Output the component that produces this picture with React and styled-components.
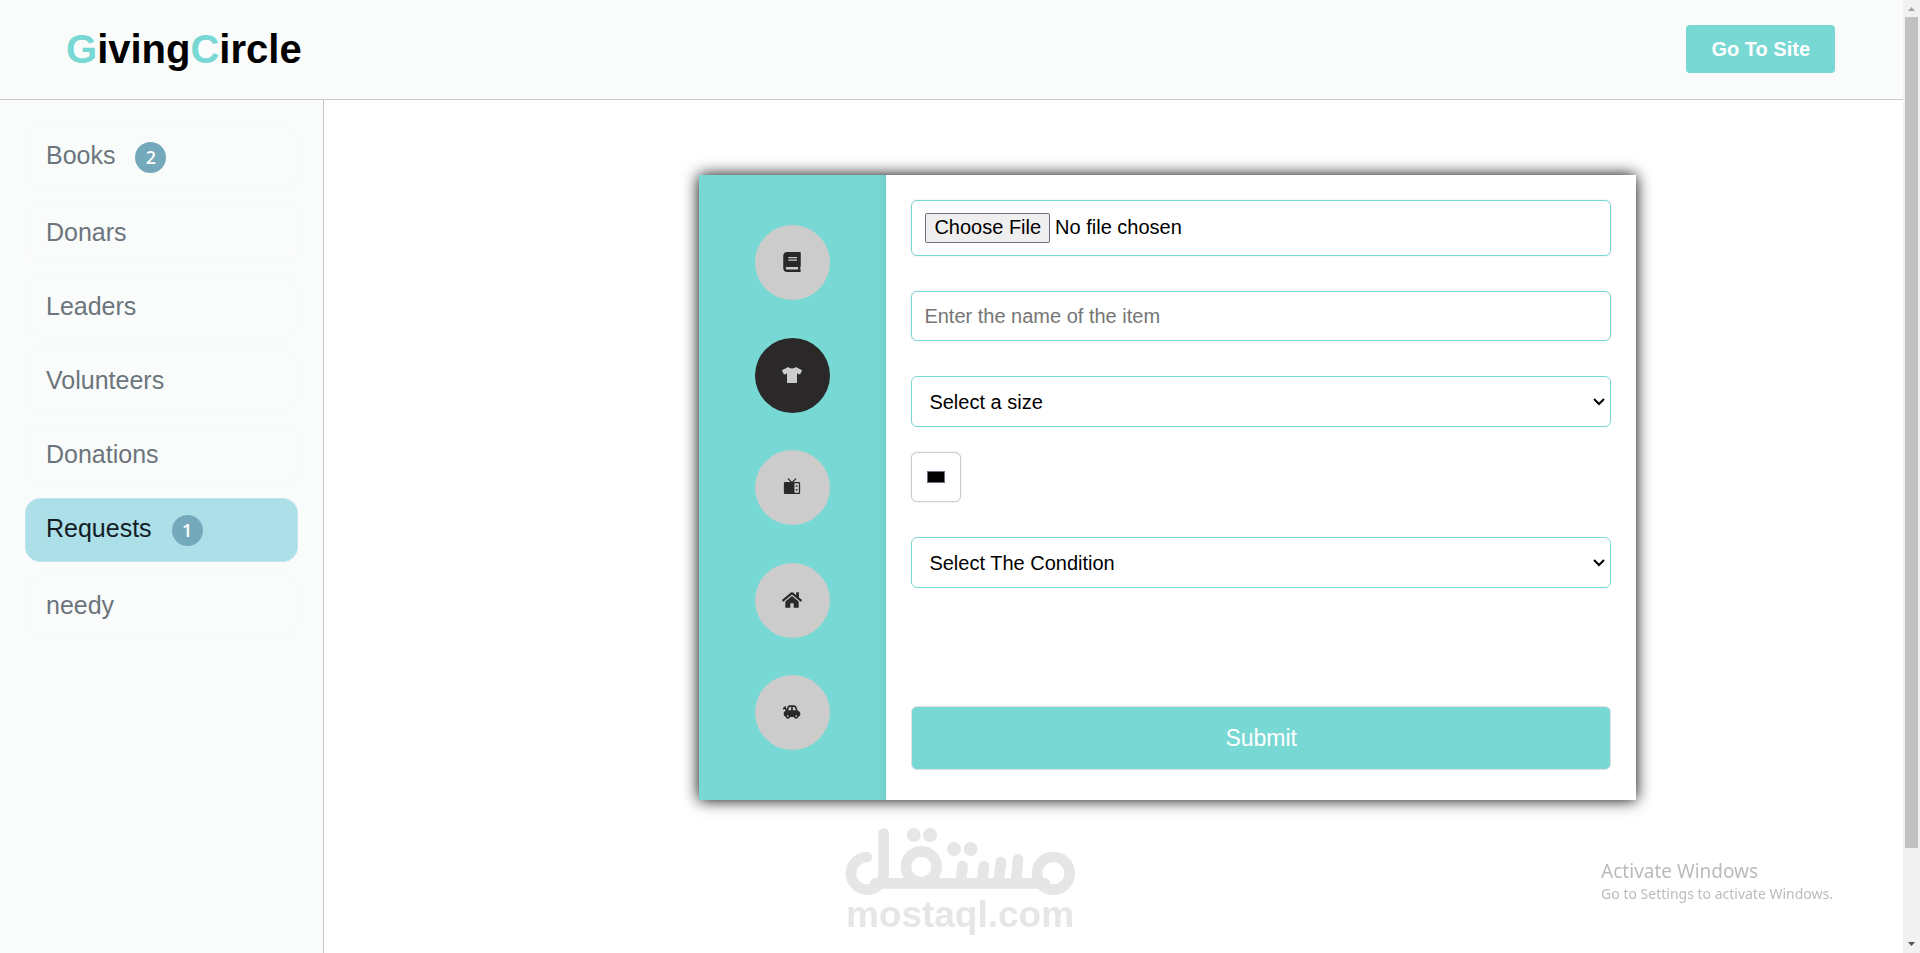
import { useState } from 'react'
import styled, { createGlobalStyle } from 'styled-components'
import { FaBook, FaTshirt, FaHome } from 'react-icons/fa'
import { PiTelevisionFill } from 'react-icons/pi'
import { MdToys } from 'react-icons/md'


const teal = '#78d8d3'
const dark = '#2a2829'
const panel = '#fafcfb'

const GlobalStyle = createGlobalStyle`
    * {
        box-sizing: border-box;
    }

    body {
        margin: 0;
        background: #fff;
        font-family: "Liberation Sans", Arial, sans-serif;
    }

    button, input, select {
        font-family: inherit;
    }
`

const Screen = styled.div`
    display: flex;
    height: 100vh;
    overflow: hidden;
`
const Page = styled.div`
    flex: 1;
    min-width: 0;
    display: flex;
    flex-flow: column;
`

const Header = styled.header`
    display: flex;
    justify-content: space-between;
    align-items: center;
    height: 100px;
    padding: 0 68px 1px 66px;
    background: ${panel};
    border-bottom: 1px solid #c8c8c8;
`
const Logo = styled.h1`
    margin: 0;
    font-size: 40px;
    line-height: 46px;
    color: #000;

    span {
        color: ${teal};
    }
`
const SiteButton = styled.button`
    height: 48px;
    padding: 1px 25px 0;
    border: 0;
    border-radius: 4px;
    background: ${teal};
    color: #fff;
    font-size: 20px;
    font-weight: bold;
    cursor: pointer;
`

const Body = styled.div`
    flex: 1;
    display: flex;
`
const Sidebar = styled.nav`
    display: flex;
    flex-flow: column;
    gap: 13px;
    width: 324px;
    padding: 25px;
    background: ${panel};
    border-right: 1px solid #c8c8c8;
`
const NavItem = styled.a`
    display: flex;
    align-items: flex-start;
    gap: 20px;
    padding: 14px 20px 15px;
    border: 1px solid ${({ $active }) => ($active ? '#bde5ec' : '#f8faf9')};
    border-radius: 15px;
    background: ${({ $active }) => ($active ? '#addfe8' : 'transparent')};
    color: ${({ $active }) => ($active ? '#141c26' : '#6c757d')};
    font-size: 25px;
    line-height: 30px;
    text-decoration: none;
`
const Badge = styled.span`
    width: 31px;
    height: 31px;
    margin-top: 2px;
    border-radius: 50%;
    background: #73a9bb;
    color: #fff;
    font-family: "Open Sans", sans-serif;
    font-size: 18px;
    font-weight: 600;
    line-height: 30px;
    text-align: center;
`

const Main = styled.main`
    flex: 1;
    padding: 75px 267px 0 375px;
`
const Card = styled.section`
    display: grid;
    grid-template-columns: 1fr 4fr;
    min-height: 625px;
    box-shadow: 0 0 15px #000;
`
const Categories = styled.div`
    display: flex;
    flex-flow: column;
    justify-content: space-between;
    align-items: center;
    padding: 50px 0;
    background: ${teal};
    box-shadow: inset -8px 0 10px -8px rgba(0, 0, 0, 0.1);
`
const CategoryButton = styled.button`
    display: flex;
    justify-content: center;
    align-items: center;
    width: 75px;
    height: 75px;
    padding: 0 1px 1px 0;
    border: 0;
    border-radius: 50%;
    background: ${({ $active }) => ($active ? dark : '#ccc')};
    color: ${({ $active }) => ($active ? '#ccc' : dark)};
    font-size: 20px;
    cursor: pointer;
`

const Form = styled.form`
    display: flex;
    flex-flow: column;
    gap: 35px;
    padding: 25px 25px 30px;
    background: #fff;
`
const SizeGroup = styled.div`
    display: flex;
    flex-flow: column;
    gap: 25px;
`
const Field = styled.input`
    width: 100%;
    height: 50px;
    padding: 12px;
    border: 1px solid ${teal};
    border-radius: 6px;
    background: #fff;
    box-shadow: 0 0 2px rgba(0, 0, 0, 0.15);
    color: #000;
    font-size: 20px;

    &::placeholder {
        color: #757575;
    }
`
const FileField = styled(Field)`
    height: 56px;
    padding: 12px 13px;

    &::file-selector-button {
        height: 30px;
        margin-right: 5px;
        padding: 0 8px 2px;
        border: 1px solid #6b7280;
        border-radius: 2px;
        background: #efefef;
        color: #000;
        font: inherit;
    }
`
const SelectWrapper = styled.div`
    position: relative;
    display: flex;

    svg {
        position: absolute;
        right: 6px;
        top: 21px;
        pointer-events: none;
    }
`
const SelectBox = styled.select`
    appearance: none;
    width: 100%;
    height: 51px;
    padding: 12px 17px;
    border: 1px solid ${teal};
    border-radius: 6px;
    background: #fff;
    color: #000;
    font-size: 20px;
`
const ColorField = styled.input`
    width: 50px;
    height: 50px;
    padding: 18px 15px;
    border: 1px solid #ccc;
    border-radius: 6px;
    background: #fff;
    box-shadow: 0 0 2px rgba(0, 0, 0, 0.15);

    &::-webkit-color-swatch-wrapper {
        padding: 0;
    }

    &::-webkit-color-swatch {
        border: 1px solid #6b7280;
        border-radius: 0;
    }
`
const Submit = styled.button`
    height: 64px;
    margin-top: auto;
    border: 1px solid #e0e0e0;
    border-radius: 6px;
    background: ${teal};
    color: #fff;
    font-size: 23px;
    cursor: pointer;
`

const Watermark = styled.div`
    position: fixed;
    left: 50%;
    bottom: 20px;
    transform: translateX(-50%);
    display: flex;
    flex-flow: column;
    align-items: center;
    color: #e6e6e6;
    font-size: 37px;
    font-weight: bold;
    line-height: 37px;
    pointer-events: none;
`
const ActivateNotice = styled.div`
    position: fixed;
    right: 87px;
    bottom: 49px;
    color: #bbb;
    font-family: "Noto Sans", sans-serif;
    font-size: 14px;
    line-height: 20px;
    pointer-events: none;

    p {
        margin: 0;
    }

    p:first-child {
        font-size: 19px;
        line-height: 26px;
    }
`

const ScrollBar = styled.div`
    display: flex;
    flex-flow: column;
    align-items: center;
    width: 17px;
    background: #f1f1f1;
`
const ScrollArrow = styled.svg`
    flex: none;
    width: 17px;
    height: 17px;
`
const ScrollThumb = styled.div`
    flex: 19;
    width: 13px;
    background: #c1c1c1;
`
const ScrollRest = styled.div`
    flex: 2;
`


const links = [
    { name: 'Books', count: 2 },
    { name: 'Donars' },
    { name: 'Leaders' },
    { name: 'Volunteers' },
    { name: 'Donations' },
    { name: 'Requests', count: 1 },
    { name: 'needy' },
]

const categories = [
    { name: 'Books', icon: <FaBook /> },
    { name: 'Clothes', icon: <FaTshirt /> },
    { name: 'Electronics', icon: <PiTelevisionFill /> },
    { name: 'Home', icon: <FaHome /> },
    { name: 'Toys', icon: <MdToys /> },
]

function MostaqlMark() {
    return (
        <svg width="230" height="68" viewBox="75 54 690 204" fill="currentColor" aria-hidden="true">
            <g fill="none" stroke="currentColor" strokeWidth="32" strokeLinecap="round">
                <path d="M141 141A49 49 0 1 0 191 190V70" />
                <path d="M165 220H675" />
                <circle cx="304" cy="170" r="46" />
                <circle cx="700" cy="190" r="49" />
                <path d="M428 168L422 215M492 168L486 215M543 156L535 215M594 149L588 215" />
            </g>
            <circle cx="281" cy="75" r="21" />
            <circle cx="330" cy="75" r="21" />
            <circle cx="402" cy="117" r="21" />
            <circle cx="452" cy="117" r="21" />
        </svg>
    )
}

function Select({ label, children }) {
    return (
        <SelectWrapper>
            <SelectBox aria-label={label}>{children}</SelectBox>
            <svg width="12" height="10" viewBox="0 0 12 10" fill="none" stroke="#000" strokeWidth="2">
                <path d="M1 2L6 7L11 2" />
            </svg>
        </SelectWrapper>
    )
}

function RequestForm() {
    const [color, setColor] = useState('#000000')

    return (
        <Form onSubmit={(e) => e.preventDefault()}>
            <FileField type="file" aria-label="Item picture" />
            <Field type="text" aria-label="Item name" placeholder="Enter the name of the item" />
            <SizeGroup>
                <Select label="Size">
                    <option>Select a size</option>
                </Select>
                <ColorField
                    type="color"
                    aria-label="Color"
                    value={color}
                    onChange={(e) => setColor(e.target.value)}
                />
            </SizeGroup>
            <Select label="Condition">
                <option>Select The Condition</option>
            </Select>
            <Submit type="submit">Submit</Submit>
        </Form>
    )
}

function App() {
    const [page, setPage] = useState('Requests')
    const [category, setCategory] = useState('Clothes')

    return (
        <>
            <GlobalStyle />
            <Screen>
                <Page>
                    <Header>
                        <Logo><span>G</span>iving<span>C</span>ircle</Logo>
                        <SiteButton>Go To Site</SiteButton>
                    </Header>
                    <Body>
                        <Sidebar>
                            {links.map(({ name, count }) => (
                                <NavItem
                                    key={name}
                                    href={`#${name}`}
                                    $active={page === name}
                                    onClick={() => setPage(name)}
                                >
                                    {name}
                                    {count && <Badge>{count}</Badge>}
                                </NavItem>
                            ))}
                        </Sidebar>
                        <Main>
                            <Card>
                                <Categories>
                                    {categories.map(({ name, icon }) => (
                                        <CategoryButton
                                            key={name}
                                            aria-label={name}
                                            $active={category === name}
                                            onClick={() => setCategory(name)}
                                        >
                                            {icon}
                                        </CategoryButton>
                                    ))}
                                </Categories>
                                <RequestForm />
                            </Card>
                        </Main>
                    </Body>
                </Page>
                <ScrollBar>
                    <ScrollArrow viewBox="0 0 17 17"><path d="M5 11L8.5 7L12 11Z" fill="#a3a3a3" /></ScrollArrow>
                    <ScrollThumb />
                    <ScrollRest />
                    <ScrollArrow viewBox="0 0 17 17"><path d="M5 6L8.5 10L12 6Z" fill="#505050" /></ScrollArrow>
                </ScrollBar>
            </Screen>
            <Watermark>
                <MostaqlMark />
                mostaql.com
            </Watermark>
            <ActivateNotice>
                <p>Activate Windows</p>
                <p>Go to Settings to activate Windows.</p>
            </ActivateNotice>
        </>
    )
}

export default App
